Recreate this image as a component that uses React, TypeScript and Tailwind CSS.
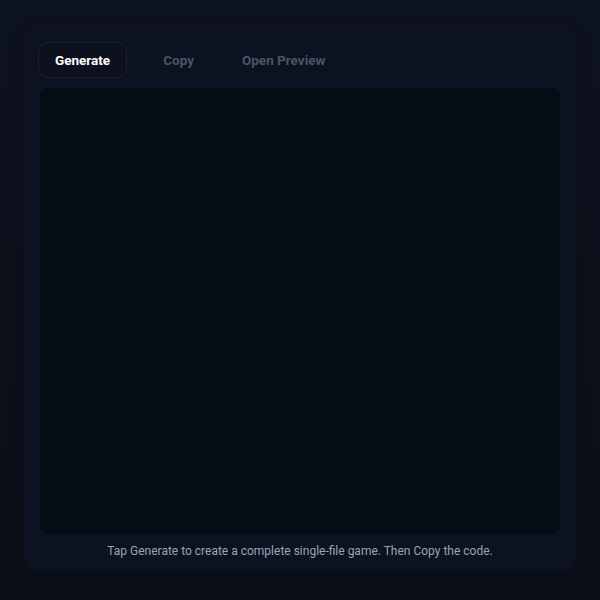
import React from "react";

export default function App() {
  return (
    <div
      className="w-[600px] h-[600px] bg-gradient-to-b from-[#0e1320] to-[#0a0f18] p-6"
      style={{ fontFamily: "Roboto, 'Liberation Sans', sans-serif" }}
    >
      <div className="w-[552px] h-[548px] rounded-xl bg-[#0d1220] px-4 pt-[18px] pb-3 flex flex-col shadow-[0_0_20px_rgba(0,0,0,0.25)]">
        <div className="flex items-center ml-[-2px]">
          <button className="h-9 px-4 rounded-[10px] border border-[#1a2131] bg-[#0c111d] text-white text-[13.5px] font-bold">
            Generate
          </button>
          <button className="ml-[19px] h-9 px-4 rounded-[10px] border border-transparent text-[#4b5466] text-[13.5px] font-bold">
            Copy
          </button>
          <button className="ml-[14px] h-9 px-4 rounded-[10px] border border-transparent text-[#4b5466] text-[13.5px] font-bold">
            Open Preview
          </button>
        </div>
        <div className="mt-[10px] h-[446px] rounded-lg bg-[#040d14]" />
        <p className="mt-[9px] text-center text-xs text-[#9aa3b3]">
          Tap Generate to create a complete single-file game. Then Copy the code.
        </p>
      </div>
    </div>
  );
}
